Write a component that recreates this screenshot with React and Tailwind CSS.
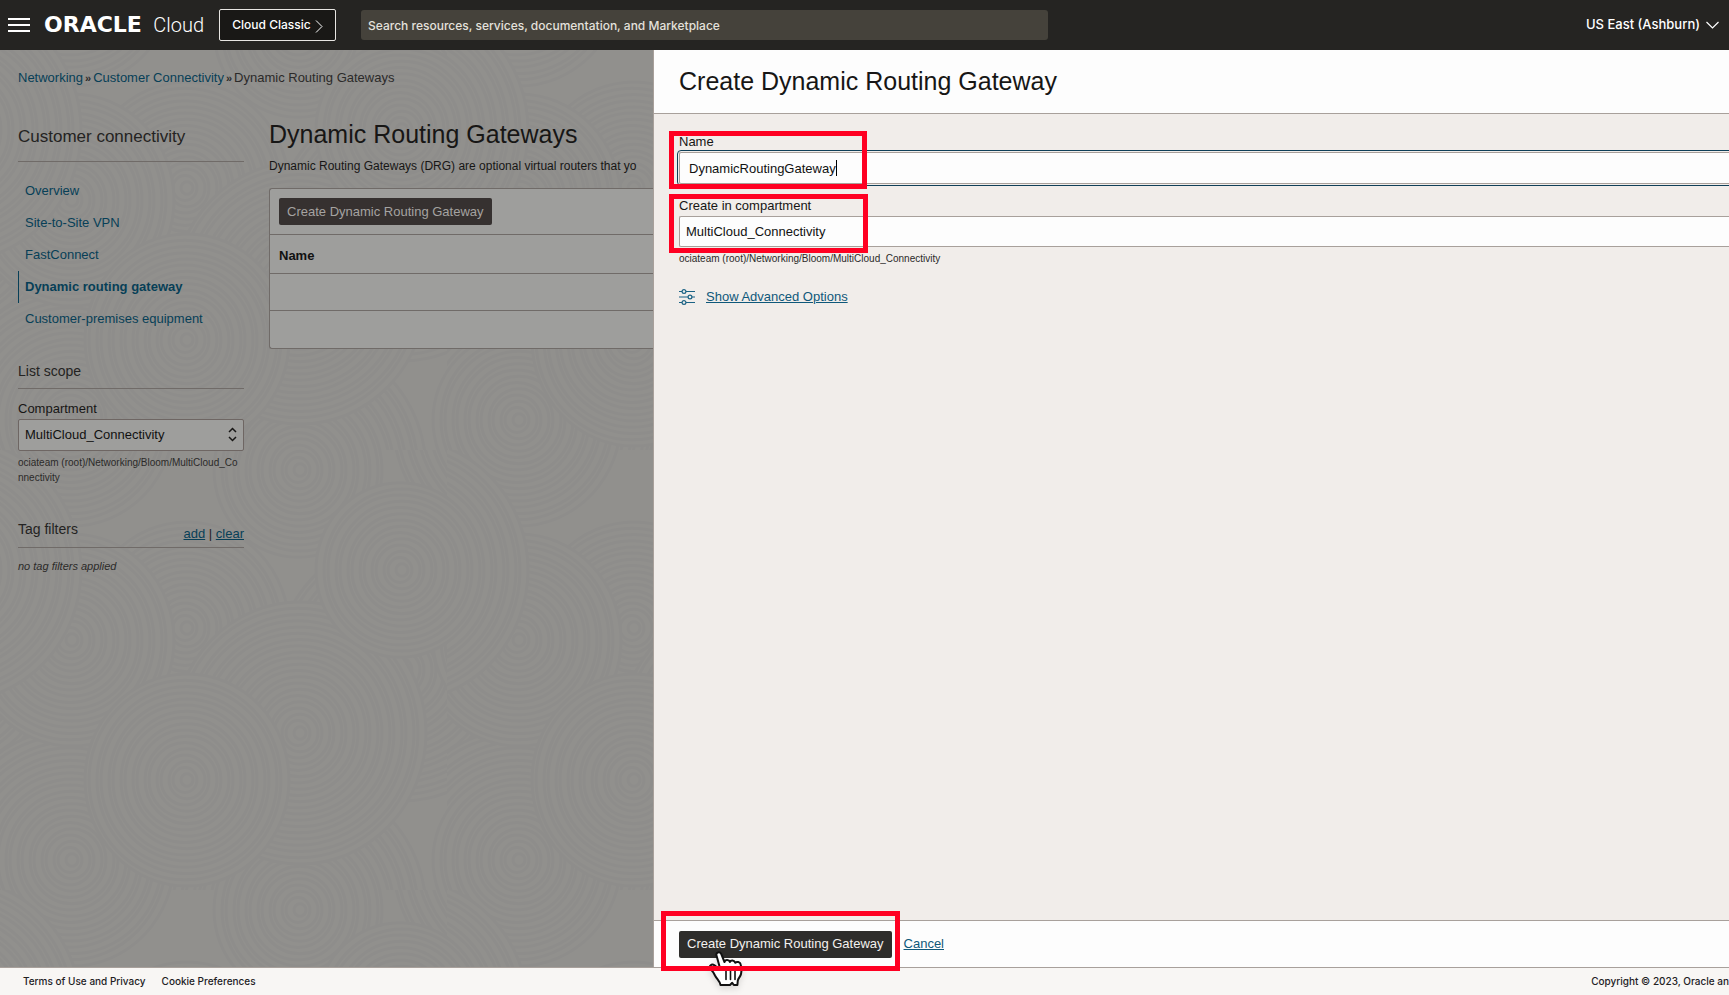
import React from "react";

const RING_RADII = [126, 120, 114, 108, 102, 96, 90, 84, 78, 72, 66, 60, 54, 48, 42, 36, 30, 24, 18, 12, 6];
const SWIRLS = [
  [400, 220], [-47, 220], [298, 20], [298, 460], [185, 178], [632, 178], [70, 410], [70, -30],
  [517, 410], [517, -30], [70, 190], [517, 190], [298, 283], [185, 330], [400, 120], [-47, 120],
];

function SwirlBackground() {
  return (
    <svg className="absolute inset-0 h-full w-full" aria-hidden="true">
      <defs>
        <pattern id="swirls" width="447" height="440" y="-40" patternUnits="userSpaceOnUse">
          <rect width="447" height="440" fill="#91908d" />
          {SWIRLS.map(([cx, cy], i) => (
            <g key={i} fill="#91908d" stroke="#8e8d8b" strokeWidth="3">
              {RING_RADII.slice(i % 3 === 0 ? 0 : i % 3 === 1 ? 4 : 7).map((r) => (
                <ellipse key={r} cx={cx + (r % 4)} cy={cy} rx={r} ry={r * 1.04} />
              ))}
            </g>
          ))}
        </pattern>
      </defs>
      <rect width="100%" height="100%" fill="url(#swirls)" />
    </svg>
  );
}

function Header() {
  return (
    <header className="flex h-[50px] shrink-0 items-center bg-[#252422] px-2 font-['Inter',sans-serif] text-[13px] font-medium text-white">
      <button type="button" aria-label="Navigation menu" className="mr-[14px] flex w-[22px] flex-col gap-1">
        <span className="h-[2px] w-full bg-white" />
        <span className="h-[2px] w-full bg-white" />
        <span className="h-[2px] w-full bg-white" />
      </button>
      <a href="#home" className="flex w-[160px] items-baseline justify-between leading-6">
        <span className="font-['DejaVu_Sans',sans-serif] text-[22px] font-bold">ORACLE</span>
        <span className="font-['Roboto',sans-serif] text-[20px] font-light">Cloud</span>
      </a>
      <button type="button" className="ml-[15px] flex h-8 w-[117px] items-center justify-center gap-1 rounded-[2px] border border-[#e8e6e3] bg-[#191816] text-[12px] whitespace-nowrap">
        Cloud Classic
        <svg width="8" height="13" viewBox="0 0 8 13" fill="none" stroke="#fff" strokeWidth="1" className="mt-[3px]"><path d="M1 .5 7 6.5 1 12.5" /></svg>
      </button>
      <input
        type="search"
        aria-label="Search"
        placeholder="Search resources, services, documentation, and Marketplace"
        className="ml-[25px] h-[30px] w-[687px] rounded-[3px] bg-[#45423b] px-[7px] text-[12px] placeholder:text-[#e4e1dc] placeholder:opacity-100"
      />
      <button type="button" className="ml-auto flex items-center gap-[6px] pr-[2px] whitespace-nowrap">
        US East (Ashburn)
        <svg width="13" height="8" viewBox="0 0 13 8" fill="none" stroke="#fff" strokeWidth="1.2"><path d="M.5 1 6.5 7l6-6" /></svg>
      </button>
    </header>
  );
}

const NAV = ["Overview", "Site-to-Site VPN", "FastConnect", "Dynamic routing gateway", "Customer-premises equipment"];

function Sidebar() {
  return (
    <aside className="w-[226px] shrink-0">
      <h2 className="border-b border-[#706b68] pt-[37px] pb-3 text-[17px] leading-6 text-[#242322]">Customer connectivity</h2>
      <nav className="mt-[13px] flex flex-col text-[#073f57]">
        {NAV.map((item) => (
          <a
            key={item}
            href="#nav"
            className={
              item === "Dynamic routing gateway"
                ? "border-l border-[#073f57] pl-[6px] leading-8 font-bold"
                : "border-l border-transparent pl-[6px] leading-8"
            }
          >
            {item}
          </a>
        ))}
      </nav>
      <h3 className="mt-[26px] border-b border-[#706b68] pb-[7px] text-[14px] leading-5 text-[#242322]">List scope</h3>
      <label htmlFor="scope" className="mt-[11px] block leading-[18px] text-[#171615]">Compartment</label>
      <div className="relative mt-px">
        <select id="scope" className="block h-8 w-full appearance-none rounded-[2px] border border-[#6e6663] bg-[#9e9e9c] px-[6px] text-[#111]">
          <option>MultiCloud_Connectivity</option>
        </select>
        <svg className="pointer-events-none absolute top-2 right-[7px]" width="9" height="15" viewBox="0 0 9 15" fill="none" stroke="#171615" strokeWidth="1.5"><path d="M1 5l3.500-3.500L8 5M1 10l3.500 3.500L8 10" /></svg>
      </div>
      <p className="mt-1 pr-1 text-[10px] leading-[15px] break-all text-[#2b2a29]">ociateam (root)/Networking/Bloom/MultiCloud_Connectivity</p>
      <div className="mt-8 flex items-end justify-between border-b border-[#706b68] pb-[3px]">
        <h3 className="pb-[3px] text-[14px] leading-6 text-[#242322]">Tag filters</h3>
        <p className="leading-5 text-[#242322]">
          <a href="#add" className="text-[#073f57] underline">add</a> | <a href="#clear" className="text-[#073f57] underline">clear</a>
        </p>
      </div>
      <p className="mt-[10px] text-[11px] leading-4 text-[#2b2a29] italic">no tag filters applied</p>
    </aside>
  );
}

function GatewayList() {
  return (
    <section className="min-w-0 flex-1 pt-[30px]">
      <h1 className="text-[25px] leading-8 whitespace-nowrap text-[#171615]">Dynamic Routing Gateways</h1>
      <p className="mt-[6px] text-[12px] leading-5 whitespace-nowrap text-[#171615]">Dynamic Routing Gateways (DRG) are optional virtual routers that yo</p>
      <div className="mt-3 rounded-l-[3px] border border-r-0 border-[#706b68] bg-[#9e9e9c]">
        <div className="px-[9px] py-[9px]">
          <button type="button" className="h-[27px] rounded-[2px] bg-[#363130] px-2 whitespace-nowrap text-[#a5a3a1]">Create Dynamic Routing Gateway</button>
        </div>
        <table className="w-full border-collapse text-left">
          <thead>
            <tr className="h-[39px] border-y border-[#706b68]">
              <th className="px-[9px] pt-1 font-bold text-[#111]">Name</th>
            </tr>
          </thead>
          <tbody>
            <tr className="h-[37px] border-b border-[#706b68]"><td /></tr>
            <tr className="h-[37px]"><td /></tr>
          </tbody>
        </table>
      </div>
    </section>
  );
}

function HandPointer() {
  return (
    <svg className="pointer-events-none absolute top-5 left-[30px] z-10 drop-shadow-md" width="34" height="37" viewBox="0 0 34 37" fill="none" aria-hidden="true">
      <path
        d="M7.500 4.500C6.500 1 11 .200 12.300 3.200L15.500 11c.600-2.600 4.600-2.700 5.400 0 .800-2.200 4.500-2 5.300.800 1.500-1.600 5-.900 5.500 1.700.800 3.500 1 6.500.300 9.500-.500 2.500-2.500 4-3.200 6.500l-.400 4.500h-3.600l-1.600-2.200-2.200 2.200H11.500c-.300-3.800-3.700-6-5.500-9.500-1.200-2.500-2.400-4.200-4.300-6.300-2.500-2.900.8-5.900 3.800-3.900l6 4.700z"
        fill="#fff" stroke="#111" strokeWidth="2" strokeLinejoin="round"
      />
      <path d="M17 19.500v9M21.500 19.500v9M26 19.500v9" stroke="#111" strokeWidth="1.600" strokeLinecap="round" />
    </svg>
  );
}

function OptionsIcon() {
  return (
    <svg width="16" height="16" viewBox="0 0 16 16" fill="none" stroke="#1c6385" strokeWidth="1.200" aria-hidden="true">
      <path d="M0 2.500h3M7 2.500h9M0 8h9M13 8h3M0 13.500h3M7 13.500h9" />
      <circle cx="5" cy="2.500" r="1.900" />
      <circle cx="11" cy="8" r="1.900" />
      <circle cx="5" cy="13.500" r="1.900" />
    </svg>
  );
}

function CreateDrawer() {
  return (
    <section aria-labelledby="drawer-title" className="relative z-10 flex min-w-0 flex-1 flex-col bg-[#f1edea] text-[#171615]">
      <header className="flex h-16 shrink-0 items-center border-b border-[#a8a09b] bg-[#fdfdfd] px-[25px] pb-[2px]">
        <h2 id="drawer-title" className="text-[25px] leading-8 whitespace-nowrap">Create Dynamic Routing Gateway</h2>
      </header>
      <form id="drg-form" className="flex-1 pt-[18px] pl-[25px]">
        <div className="relative">
          <label htmlFor="drg-name" className="block leading-5">Name</label>
          <div className="relative">
            <input
              id="drg-name"
              type="text"
              defaultValue="DynamicRoutingGateway"
              className="block h-8 w-full rounded-l-[2px] border border-r-0 border-[#a8a09b] bg-[#fdfdfd] px-[9px] text-[#111] outline-1 outline-offset-1 outline-[#0f3f58]"
            />
            <span className="absolute top-2 left-[157px] h-4 w-px bg-black" />
          </div>
          <div className="pointer-events-none absolute -top-[1px] -bottom-[5px] -left-[10px] w-[198px] border-[5px] border-[#ff0022]" />
        </div>
        <div className="relative mt-3">
          <label htmlFor="drg-compartment" className="block leading-5">Create in compartment</label>
          <select id="drg-compartment" className="block h-[31px] w-full appearance-none rounded-l-[2px] border border-r-0 border-[#a8a09b] bg-[#fdfdfd] px-[6px] text-[#111]">
            <option>MultiCloud_Connectivity</option>
          </select>
          <div className="pointer-events-none absolute -top-[2px] -bottom-[6px] -left-[10px] w-[199px] border-[5px] border-[#ff0022]" />
        </div>
        <p className="mt-1 text-[10px] leading-[15px] text-[#2b2a29]">ociateam (root)/Networking/Bloom/MultiCloud_Connectivity</p>
        <div className="mt-[21px] flex items-center gap-[11px] leading-5">
          <OptionsIcon />
          <a href="#advanced" className="text-[#0f587a] underline">Show Advanced Options</a>
        </div>
      </form>
      <footer className="flex h-[47px] shrink-0 items-center border-t border-[#a8a09b] bg-[#fdfdfd] pl-[25px]">
        <div className="relative">
          <button type="submit" form="drg-form" className="block h-[27px] rounded-[2px] bg-[#2e2d2b] px-2 whitespace-nowrap text-[#f3f1ef]">Create Dynamic Routing Gateway</button>
          <HandPointer />
          <div className="pointer-events-none absolute -top-[20px] -right-[8px] -bottom-[13px] -left-[18px] z-20 border-[5px] border-[#ff0022]" />
        </div>
        <a href="#cancel" className="ml-3 text-[#0f587a] underline">Cancel</a>
      </footer>
    </section>
  );
}

export default function App() {
  return (
    <div className="flex min-h-screen flex-col overflow-x-hidden font-['Liberation_Sans',Arial,sans-serif] text-[13px]">
      <Header />
      <main className="flex flex-1">
        <div className="relative w-[654px] shrink-0 overflow-hidden border-r border-[#a8a09b] bg-[#91908d]">
          <SwirlBackground />
          <div className="relative pt-[18px] pl-[18px]">
            <nav aria-label="Breadcrumb" className="flex gap-[2px] leading-5 text-[#2b2a29]">
              <a href="#networking" className="text-[#073f57]">Networking</a>
              <span className="text-[11px] font-bold">»</span>
              <a href="#connectivity" className="text-[#073f57]">Customer Connectivity</a>
              <span className="text-[11px] font-bold">»</span>
              <span>Dynamic Routing Gateways</span>
            </nav>
            <div className="flex gap-[25px]">
              <Sidebar />
              <GatewayList />
            </div>
          </div>
        </div>
        <CreateDrawer />
      </main>
      <footer className="flex h-7 shrink-0 items-center gap-4 border-t border-[#a8a09b] bg-[#f8f6f4] pl-[23px] font-['Inter',sans-serif] text-[10px] font-medium whitespace-nowrap text-[#22211f]">
        <a href="#terms">Terms of Use and Privacy</a>
        <a href="#cookies">Cookie Preferences</a>
        <p className="ml-auto">Copyright © 2023, Oracle an</p>
      </footer>
    </div>
  );
}
